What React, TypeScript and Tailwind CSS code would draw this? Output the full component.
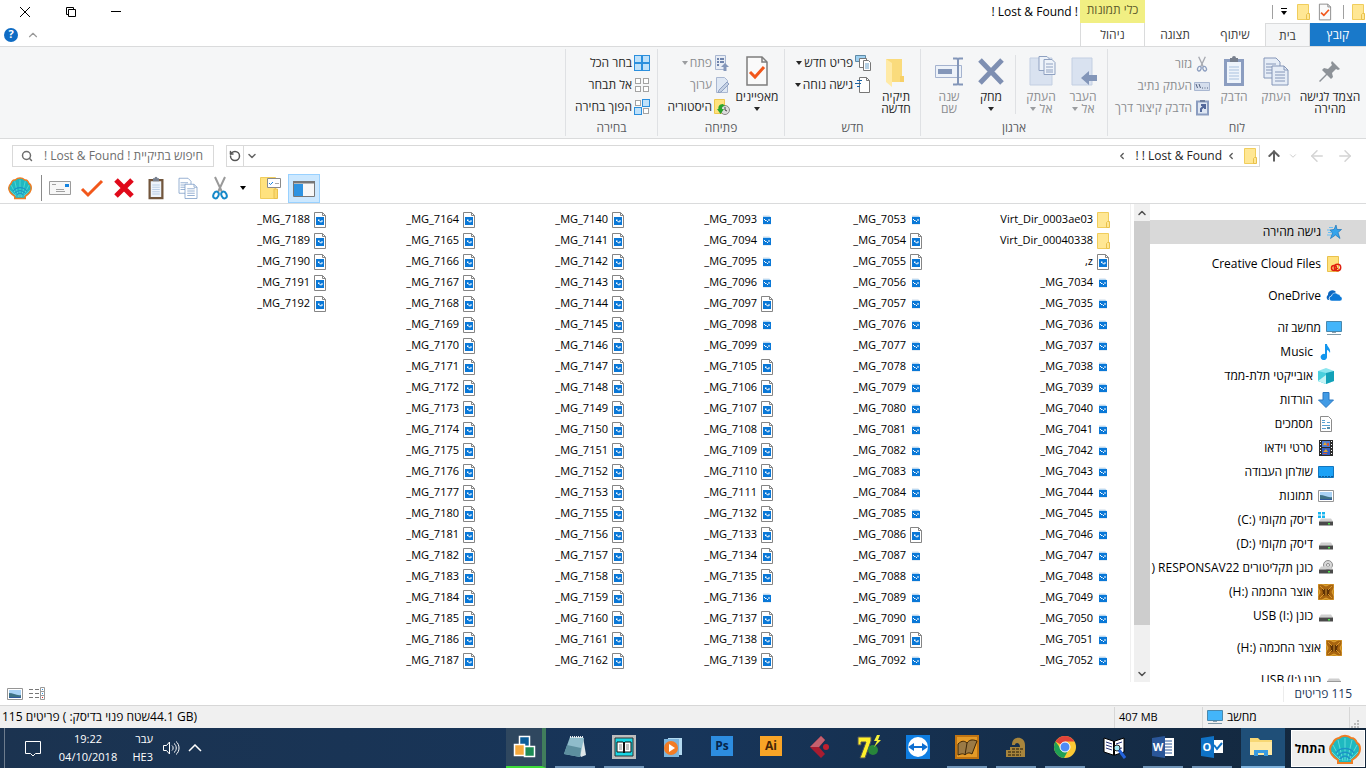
import type { ReactNode } from "react";
import { ArrowLeft, ArrowRight, ArrowUp, ChevronDown, ChevronLeft, ChevronUp, RotateCcw, Search } from "lucide-react";

type IconProps = { className?: string };

/* ---------- icons ---------- */

function Folder({ className = "h-4 w-4" }: IconProps) {
  return (
    <svg viewBox="0 0 16 16" className={className}>
      <path d="M2.5.5h11v15h-11z" fill="#ffe794" stroke="#f0cd5c" />
      <path d="M12.500 9.500h2v6h-3v-5z" fill="#ffe794" stroke="#e9c14c" />
    </svg>
  );
}

function PageImage() {
  return (
    <svg viewBox="0 0 16 16" className="h-4 w-4">
      <path d="M2.5.5h8l3 3v12h-11z" fill="#fff" stroke="#858585" />
      <path d="M10.5.5v3h3" fill="none" stroke="#858585" />
      <path d="M4 5h8v8H4z" fill="#0a78d7" />
      <path d="M6 9V7.500h1.500V9H9v-.500h2v1H9.500v1h-1v-1H7V9z" fill="#fff" />
    </svg>
  );
}

function SmallImage() {
  return (
    <svg viewBox="0 0 16 16" className="h-4 w-4">
      <path d="M4 3h6l2 2v8H4z" fill="#e6edf4" />
      <path d="M4 5h8v7H4z" fill="#0a78d7" />
      <path d="M4 4h7v1H4z" fill="#b9d9f3" />
      <path d="M5 7h1v1H5zM6 8h1.500v1H6zM8 9h1v1H8zM9 7.500h2v1H9z" fill="#fff" />
    </svg>
  );
}

function CheckPage({ className = "h-4 w-4" }: IconProps) {
  return (
    <svg viewBox="0 0 24 32" className={className}>
      <path d="M2 2h15l5 5v23H2z" fill="#fafafa" stroke="#7e7e7e" strokeWidth="1.500" />
      <path d="M17 2v5h5" fill="none" stroke="#7e7e7e" strokeWidth="1.500" />
      <path d="m5 17 5 5 9-10" fill="none" stroke="#f2571b" strokeWidth="3" />
    </svg>
  );
}

function Pin() {
  return (
    <svg viewBox="0 0 32 32" className="h-8 w-8">
      <path d="m18 6 8 8-2 1-2-1-4 4 1 4-2 2-4-4-7 7-1-1 7-7-4-4 2-2 4 1 4-4-1-2z" fill="#8d9298" />
    </svg>
  );
}

function CopyPages({ className = "h-8 w-8", color = "#8496b8", fill = "#e6edf7" }: IconProps & { color?: string; fill?: string }) {
  return (
    <svg viewBox="0 0 32 32" className={className}>
      <path d="M4 3h12l4 4v16H4z" fill={fill} stroke={color} />
      <path d="M6 9h10M6 12h10M6 15h8M6 18h8" stroke={color} />
      <path d="M12 11h12l4 4v15H12z" fill={fill} stroke={color} />
      <path d="M24 11v4h4M15 17h10M15 20h10M15 23h10M15 26h10" fill="none" stroke={color} />
    </svg>
  );
}

function Clipboard({ className = "h-8 w-8", board = "#8b9dc0" }: IconProps & { board?: string }) {
  return (
    <svg viewBox="0 0 32 32" className={className}>
      <path d="M6 4h20v27H6z" fill={board} />
      <path d="M9 7h14v21H9z" fill="#eef4fb" />
      <path d="M12 3h2a2 2 0 0 1 4 0h2v4h-8z" fill="#777f8d" />
      <path d="M11 12h10M11 15h10M11 18h10M11 21h10M11 24h10" stroke="#a9c1de" />
    </svg>
  );
}

function Scissors({ className = "h-4 w-4", handle = "#8d9fc0", blade = "#a6a9b0" }: IconProps & { handle?: string; blade?: string }) {
  return (
    <svg viewBox="0 0 16 24" className={className}>
      <path d="M3 1l7 15M13 1 6 16" stroke={blade} strokeWidth="2" />
      <ellipse cx="4" cy="19" rx="2.500" ry="3.500" fill="none" stroke={handle} strokeWidth="2" transform="rotate(25 4 19)" />
      <ellipse cx="12" cy="19" rx="2.500" ry="3.500" fill="none" stroke={handle} strokeWidth="2" transform="rotate(-25 12 19)" />
    </svg>
  );
}

function PathStrip() {
  return (
    <svg viewBox="0 0 16 16" className="h-4 w-4">
      <path d="M.5 4.500h15v8H.5z" fill="#d5deed" stroke="#a9b7d1" />
      <path d="m2 6 1.500 4M5 6l1.500 4M8 10h1M10.500 10h1M13 10h1" stroke="#53617f" />
    </svg>
  );
}

function PasteShortcut() {
  return (
    <svg viewBox="0 0 16 16" className="h-4 w-4">
      <path d="M3 1.500h11v13H3z" fill="#dfe7f3" stroke="#8b9dc0" strokeWidth="2" />
      <path d="M6 0h5v2H6z" fill="#70809f" />
      <path d="M7 5h4v4M11 5l-4 4v3" fill="none" stroke="#53689a" strokeWidth="2" />
    </svg>
  );
}

function MoveTo() {
  return (
    <svg viewBox="0 0 32 32" className="h-8 w-8">
      <path d="M5 3h20v27H5z" fill="#d9e2f0" stroke="#c3cfe2" />
      <path d="M14 23l8-7v4h8v6h-8v4z" fill="#8396b9" />
    </svg>
  );
}

function CopyTo() {
  return (
    <svg viewBox="0 0 32 32" className="h-8 w-8">
      <path d="M5 3h22v27H5z" fill="#d9e2f0" stroke="#c3cfe2" />
      <path d="M14 1.500h8l3 3v11H14z" fill="#eef3fa" stroke="#8fa1c1" />
      <path d="M19 4.500h8l3 3v12H19z" fill="#eef3fa" stroke="#8fa1c1" />
      <path d="M21 9h7M21 12h7M21 15h7M21 17h7" stroke="#8fa1c1" />
    </svg>
  );
}

function BigCross() {
  return (
    <svg viewBox="0 0 32 32" className="h-8 w-8">
      <path d="m5 5 22 23M27 5 5 28" stroke="#7e8fb2" strokeWidth="5" />
    </svg>
  );
}

function Rename() {
  return (
    <svg viewBox="0 0 32 32" className="h-8 w-8">
      <path d="M2.500 10.500h26v12h-26z" fill="#edf2f9" stroke="#a5b3cf" />
      <path d="M5 14h14v5H5z" fill="#8396b9" />
      <path d="M20 3.500h4l1 1 1-1h4M25 4v25M20 29.500h4l1-1 1 1h4" fill="none" stroke="#8396b9" strokeWidth="2" />
    </svg>
  );
}

function NewFolder() {
  return (
    <svg viewBox="0 0 32 32" className="h-8 w-8">
      <path d="M6 4h16v21l2 2H10z" fill="#fadb7c" />
      <path d="M6 4l6 4v24l-6-5z" fill="#ffeaa6" />
      <path d="M20 21h4v6h-4z" fill="#f7d068" />
    </svg>
  );
}

function NewItem() {
  return (
    <svg viewBox="0 0 16 16" className="h-4 w-4">
      <path d="M.5.5h10v6H.5z" fill="#9fd0f0" stroke="#5e8aa6" />
      <path d="M4.500 3.500h7v9h-7z" fill="#fff" stroke="#777" />
      <path d="M8.500 5.500h5l2 2v8h-7z" fill="#fff" stroke="#777" />
      <path d="M10 9h4M10 11h4M10 13h4" stroke="#6aa0c8" />
    </svg>
  );
}

function EasyAccess() {
  return (
    <svg viewBox="0 0 16 16" className="h-4 w-4">
      <path d="M4.5.5h7l3 3v12h-10z" fill="#fff" stroke="#777" />
      <path d="M11.5.5v3h3" fill="none" stroke="#777" />
      <path d="M2 3.500h5M0 6.500h6M2 9.500h3" stroke="#1763a6" />
    </svg>
  );
}

function OpenIcon() {
  return (
    <svg viewBox="0 0 16 16" className="h-4 w-4">
      <path d="M1.500.500h10v14h-10z" fill="#e8edf5" stroke="#a9b7d1" />
      <path d="M3 4h2M3 7h2M3 10h2M6 4h4M6 7h4" stroke="#7085ad" strokeWidth="2" />
      <path d="M7 12l4-4 4 4h-2.500v4h-3v-4z" fill="#8396b9" />
    </svg>
  );
}

function EditIcon() {
  return (
    <svg viewBox="0 0 16 16" className="h-4 w-4">
      <path d="M2.500.500h8l3 3v12h-11z" fill="#dfe8f4" stroke="#a9b7d1" />
      <path d="m5 13 8-8 2 2-8 8-3 1z" fill="#c3cfe2" stroke="#8ea0c2" />
    </svg>
  );
}

function HistoryIcon() {
  return (
    <svg viewBox="0 0 16 16" className="h-4 w-4">
      <path d="M.5.500h10v14H.5z" fill="#ffe27e" stroke="#efc84f" />
      <circle cx="11" cy="11" r="4.500" fill="#ddd" stroke="#888" />
      <path d="M11 8v3l2 1" fill="none" stroke="#444" />
      <path d="M9 5C5 5 4 8 4.500 10H3l3.500 5L10 10H8c0-2 .5-3 3-3z" fill="#2ca52c" />
    </svg>
  );
}

function SquareGrid({ filled }: { filled: boolean[] }) {
  const spots = [[1, 1], [9, 1], [1, 9], [9, 9]];
  return (
    <svg viewBox="0 0 16 16" className="h-4 w-4">
      {spots.map(([x, y], i) =>
        filled[i] ? (
          <rect key={i} x={x - 0.5} y={y - 0.5} width="7" height="7" fill="#bfe1fa" stroke="#2b8fdd" />
        ) : (
          <rect key={i} x={x + 0.5} y={y + 0.5} width="5" height="5" fill="#fff" stroke="#a3a3a3" />
        ),
      )}
    </svg>
  );
}

function QuickStar() {
  return (
    <svg viewBox="0 0 16 16" className="h-4 w-4">
      <path d="m10 1 1 4.500H15.500l-3.500 3 2 6L9.500 11l-5 3.500 2-5.500L4 6l4-.500z" fill="#35a4ec" stroke="#1a72b8" strokeWidth=".7" />
      <path d="M3 3.500h4M1 6h3M2 8.500h4M1 11h4" stroke="#68bdf2" />
    </svg>
  );
}

function CreativeCloud() {
  return (
    <svg viewBox="0 0 16 16" className="h-4 w-4">
      <path d="M1.5.5h11v15h-11z" fill="#ffe27e" stroke="#e9c14c" />
      <circle cx="8" cy="12" r="2.500" fill="none" stroke="#e0200f" strokeWidth="1.500" />
      <circle cx="11.500" cy="11.500" r="3.200" fill="none" stroke="#e0200f" strokeWidth="1.500" />
      <path d="m8 11 2 1.500h2" fill="none" stroke="#e0200f" />
    </svg>
  );
}

function OneDriveIcon() {
  return (
    <svg viewBox="0 0 16 16" className="h-4 w-4">
      <path d="M2 12a3 3 0 0 1 0-5 4.500 4.500 0 0 1 8-3l-1 1a5 5 0 0 0-4 3 3 3 0 0 0-2 4z" fill="#0a66c0" />
      <path d="M6 13a2.500 2.500 0 0 1-.500-5 3.500 3.500 0 0 1 6-2 3 3 0 0 1 3 2.500A2.300 2.300 0 0 1 14 13z" fill="#0a78d7" stroke="#fff" strokeWidth=".5" />
    </svg>
  );
}

function Monitor() {
  return (
    <svg viewBox="0 0 16 16" className="h-4 w-4">
      <path d="M.5 1.500h15v10H.5z" fill="#43b5fa" stroke="#4a88ad" />
      <path d="M6 12h4v1H6z" fill="#8da2af" />
      <path d="M1 14.500h14" stroke="#7f99a8" />
    </svg>
  );
}

function MusicNote() {
  return (
    <svg viewBox="0 0 16 16" className="h-4 w-4">
      <path d="M7 0h2c0 3 4 4 3 9-1-2-2-3-3-3v6.500A3.200 3.200 0 1 1 7 10z" fill="#1296ee" />
    </svg>
  );
}

function Cube() {
  return (
    <svg viewBox="0 0 16 16" className="h-4 w-4">
      <path d="m0 3 8-3 8 3v10l-8 3-8-3z" fill="#8ce6ef" />
      <path d="m8 5 8-2v10l-8 3z" fill="#12a1b8" />
      <path d="m0 3 8 2v11l-8-3z" fill="#48cfdd" />
      <path d="m0 13 8-6v9z" fill="#c5f4f6" />
    </svg>
  );
}

function DownArrow() {
  return (
    <svg viewBox="0 0 16 16" className="h-4 w-4">
      <path d="M5 .5h6v7.500h4.500L8 15.500.5 8H5z" fill="#429be5" stroke="#2b78c2" />
    </svg>
  );
}

function DocumentIcon() {
  return (
    <svg viewBox="0 0 16 16" className="h-4 w-4">
      <path d="M2.500.500h8l3 3v12h-11z" fill="#fff" stroke="#8c8c8c" />
      <path d="M4 4.500h3M4 6.500h3M9 6.500h3M4 9.500h8M4 12.500h4" stroke="#5aa2d0" />
      <path d="M9 11h3v2H9z" fill="#5a8fa8" />
    </svg>
  );
}

function Film() {
  return (
    <svg viewBox="0 0 16 16" className="h-4 w-4">
      <path d="M1 0h14v16H1z" fill="#2b2b2b" />
      <path d="M4 1h8v6H4z" fill="#4f7dd1" />
      <path d="M4 8h8v7H4z" fill="#345ec1" />
      <path d="m5 5 2-3 2 3zM5 12l3-3 2 3z" fill="#e4a62e" />
      <path d="M9 3h2v3H9zM5 13h4v1H5z" fill="#d4583a" />
      <path d="M2.500 1v15M13.500 1v15" stroke="#fff" strokeDasharray="1 2" />
    </svg>
  );
}

function Desktop() {
  return (
    <svg viewBox="0 0 16 16" className="h-4 w-4">
      <path d="M.5 2.500h15v11H.5z" fill="#1ba1f6" stroke="#1376be" />
      <path d="M1 12.500h14" stroke="#0d5c9c" strokeDasharray="2 1" />
    </svg>
  );
}

function Picture() {
  return (
    <svg viewBox="0 0 16 16" className="h-4 w-4">
      <path d="M.5 2.500h15v11H.5z" fill="#fff" stroke="#959595" />
      <path d="M2 4h12v8H2z" fill="#a9d2f5" />
      <path d="M2 7c4 0 8 3 12 2v3H2z" fill="#3f7285" />
      <path d="M2 11h12v1H2z" fill="#305a9c" />
    </svg>
  );
}

function Drive({ kind }: { kind?: "windows" | "disc" }) {
  return (
    <svg viewBox="0 0 16 16" className="h-4 w-4">
      {kind === "windows" && <path d="M0 0h3v2.500H0zM4 0h3v2.500H4zM0 3.500h3V6H0zM4 3.500h3V6H4z" fill="#18b4ee" />}
      {kind === "disc" && <circle cx="10" cy="5" r="4.500" fill="#d8d8d8" stroke="#8c8c8c" />}
      {kind === "disc" && <circle cx="10" cy="5" r="1.500" fill="#fff" stroke="#888" />}
      <path d="M3 6.500h10l2 3H1z" fill="#cfcfcf" />
      <path d="M1 9.500h14v4H1z" fill="#4a4a4a" />
      <path d="M10 11h2v1.500h-2z" fill="#4be04b" />
    </svg>
  );
}

function Treasure() {
  return (
    <svg viewBox="0 0 16 16" className="h-4 w-4">
      <path d="M0 0h16v16H0z" fill="#c98a1b" />
      <path d="M0 0h4l4 2 4-2h4v4l-2 4 2 4v4h-4l-4-2-4 2H0v-4l2-4-2-4z" fill="#a86510" stroke="#e3a93a" />
      <path d="M4 5h8l-1 4 1 3-4-1-4 1 1-3z" fill="#5f3206" />
      <path d="m2 2 4 4M14 2l-4 4M2 14l4-4M14 14l-4-4M8 5v6" stroke="#d9972b" />
    </svg>
  );
}

function Shell({ className = "h-6 w-6" }: IconProps) {
  return (
    <svg viewBox="0 0 32 32" className={className}>
      <path d="M9 30v-3C4 24 1 21 1 16c0-3 2-5 3-6 1-3 4-5 6-5 3-3 9-3 12 0 3 0 5 2 6 5 2 1 3 3 3 6 0 5-3 8-8 11v3z" fill="#1fb9c0" stroke="#ee7d24" strokeWidth="2" />
      <path d="M16 28V5M14 28 9 7M18 28l5-21M12 27 4 12M20 27l8-15M11 27l-8-8M21 27l8-8" stroke="#62dcdc" />
      <path d="M7 20c4-6 14-6 18 0M9 23c4-5 10-5 14 0M11 26c3-4 7-4 10 0" fill="none" stroke="#1c93c6" strokeWidth="1.500" />
    </svg>
  );
}

function Caret({ className = "text-black" }: IconProps) {
  return (
    <svg viewBox="0 0 6 4" className={`h-1 w-1.5 ${className}`}>
      <path d="M0 0h6L3 4z" fill="currentColor" />
    </svg>
  );
}

/* ---------- ribbon ---------- */

function BigButton({ icon, lines, width = "w-[42px]", caret, muted }: {
  icon: ReactNode; lines: string[]; width?: string; caret?: boolean; muted?: boolean;
}) {
  const tone = muted ? "text-[#8b8d90]" : "text-[#262626]";
  const last = lines.length - 1;
  return (
    <button className={`flex shrink-0 flex-col items-center whitespace-nowrap pt-1.5 ${width} ${tone}`}>
      {icon}
      {lines.map((line, i) => (
        <span key={line} className={`flex items-center gap-1 leading-3 ${i === 0 ? "mt-1" : ""}`}>
          {line}
          {caret && last > 0 && i === last && <Caret className="text-[#9b9da0]" />}
        </span>
      ))}
      {caret && last === 0 && <Caret className="mt-1 text-[#262626]" />}
    </button>
  );
}

function SmallButton({ icon, label, caret, muted }: { icon: ReactNode; label: string; caret?: boolean; muted?: boolean }) {
  return (
    <button className={`flex h-[22px] items-center gap-0.5 whitespace-nowrap ${muted ? "text-[#8b8d90]" : "text-[#262626]"}`}>
      {icon}
      {label}
      {caret && <Caret className={muted ? "text-[#9b9da0]" : "text-[#262626]"} />}
    </button>
  );
}

function Group({ title, width, inset = "pr-[3px]", children }: { title: string; width: string; inset?: string; children: ReactNode }) {
  return (
    <section aria-label={title} className={`my-0.5 flex shrink-0 flex-col border-l border-[#dfe1e4] ${width}`}>
      <div className={`flex h-[73px] ${inset}`}>{children}</div>
      <div className="text-center leading-4 text-[#5a5c60]">{title}</div>
    </section>
  );
}

function Ribbon() {
  return (
    <div className="flex h-[93px] shrink-0 border-y border-[#dadbdc] bg-[#f5f6f7]">
      <Group title="לוח" width="w-[259px]">
        <BigButton icon={<Pin />} lines={["הצמד לגישה", "מהירה"]} width="w-[66px]" />
        <BigButton icon={<CopyPages />} lines={["העתק"]} muted />
        <BigButton icon={<Clipboard />} lines={["הדבק"]} muted />
        <div className="flex flex-col pr-[3px] pt-1">
          <SmallButton icon={<Scissors />} label="גזור" muted />
          <SmallButton icon={<PathStrip />} label="העתק נתיב" muted />
          <SmallButton icon={<PasteShortcut />} label="הדבק קיצור דרך" muted />
        </div>
      </Group>
      <Group title="ארגון" width="w-[187px]">
        <BigButton icon={<MoveTo />} lines={["העבר", "אל"]} caret muted />
        <BigButton icon={<CopyTo />} lines={["העתק", "אל"]} caret muted />
        <div className="ml-[3px] mr-1 my-1.5 w-px shrink-0 bg-[#dfe1e4]" />
        <BigButton icon={<BigCross />} lines={["מחק"]} caret />
        <BigButton icon={<Rename />} lines={["שנה", "שם"]} muted />
      </Group>
      <Group title="חדש" width="w-[136px]">
        <BigButton icon={<NewFolder />} lines={["תיקיה", "חדשה"]} />
        <div className="flex flex-col pr-1 pt-[3px]">
          <SmallButton icon={<NewItem />} label="פריט חדש" caret />
          <SmallButton icon={<EasyAccess />} label="גישה נוחה" caret />
        </div>
      </Group>
      <Group title="פתיחה" width="w-[127px]">
        <BigButton icon={<CheckPage className="h-8 w-7" />} lines={["מאפיינים"]} width="w-12" caret />
        <div className="flex flex-col pr-[3px] pt-[3px]">
          <SmallButton icon={<OpenIcon />} label="פתח" caret muted />
          <SmallButton icon={<EditIcon />} label="ערוך" muted />
          <SmallButton icon={<HistoryIcon />} label="היסטוריה" />
        </div>
      </Group>
      <Group title="בחירה" width="w-[92px]" inset="pr-[7px]">
        <div className="flex flex-col pt-[3px]">
          <SmallButton icon={<SquareGrid filled={[true, true, true, true]} />} label="בחר הכל" />
          <SmallButton icon={<SquareGrid filled={[false, false, false, false]} />} label="אל תבחר" />
          <SmallButton icon={<SquareGrid filled={[false, true, true, false]} />} label="הפוך בחירה" />
        </div>
      </Group>
    </div>
  );
}

/* ---------- window chrome ---------- */

function TitleBar() {
  return (
    <header className="shrink-0">
      <div className="flex h-[23px]">
        <div className="flex w-[221px] shrink-0 items-center">
          <Folder />
          <span className="ml-1 mr-1.5 h-3.5 w-px bg-[#a0a0a0]" />
          <span className="w-1" />
          <CheckPage className="h-[18px] w-5" />
          <span className="w-1" />
          <Folder />
          <button aria-label="התאם אישית" className="mx-2 flex flex-col items-center gap-0.5">
            <span className="h-px w-1.5 bg-black" />
            <Caret />
          </button>
          <span className="h-3.5 w-px bg-[#a0a0a0]" />
        </div>
        <div className="w-[65px] shrink-0 bg-[#f1ef83] pt-0.5 text-center leading-4 text-[#5d5b2c]">כלי תמונות</div>
        <h1 dir="ltr" className="px-0.5 pt-1 leading-4">! Lost &amp; Found !</h1>
        <div dir="ltr" className="mr-auto flex">
          <button aria-label="סגור" className="flex w-[50px] items-center justify-center">
            <svg viewBox="0 0 10 10" className="h-2.5 w-2.5"><path d="m0 0 10 10M10 0 0 10" stroke="#000" /></svg>
          </button>
          <button aria-label="שחזר" className="flex w-[42px] items-center justify-center">
            <svg viewBox="0 0 10 10" className="h-2.5 w-2.5"><path d="M2.500 2.500h7v7h-7zM2.500 7.500h-2v-7h7v2" fill="none" stroke="#000" /></svg>
          </button>
          <button aria-label="מזער" className="flex w-12 items-center justify-center">
            <span className="h-px w-2.5 bg-black" />
          </button>
          <span className="w-10" />
        </div>
      </div>
      <nav className="flex h-[23px] text-[#3a3a3a]">
        <button className="w-14 bg-[#1979ca] text-white">קובץ</button>
        <button className="-mb-px w-[45px] border-x border-t border-[#dadbdc] bg-[#f5f6f7]">בית</button>
        <button className="w-[60px]">שיתוף</button>
        <button className="w-[60px]">תצוגה</button>
        <button className="w-[65px] border-x border-[#dadbdc]">ניהול</button>
        <div dir="ltr" className="mr-auto flex items-center gap-2 pl-1">
          <button aria-label="עזרה" className="flex h-3.5 w-3.5 items-center justify-center rounded-full bg-[#0f6cc4] text-[11px] font-bold text-white">?</button>
          <button aria-label="מזער רצועת כלים"><ChevronUp className="h-3.5 w-3.5 text-[#9a9a9a]" /></button>
        </div>
      </nav>
    </header>
  );
}

function AddressBar() {
  return (
    <div className="flex h-[34px] shrink-0 items-center px-3 text-[#222]">
      <button aria-label="קדימה"><ArrowRight className="h-[18px] w-[18px] text-[#d4d4d4]" /></button>
      <button aria-label="אחורה" className="mr-2.5"><ArrowLeft className="h-[18px] w-[18px] text-[#d4d4d4]" /></button>
      <button aria-label="מיקומים אחרונים" className="mr-2.5"><ChevronDown className="h-2.5 w-2.5 text-[#c4c4c4]" /></button>
      <button aria-label="למעלה" className="ml-1.5 mr-1.5"><ArrowUp className="h-4 w-4 text-[#5f5f5f]" strokeWidth={3} /></button>
      <div className="flex h-[22px] grow items-center border border-[#d9d9d9] pr-px">
        <Folder />
        <ChevronLeft className="mr-1.5 h-2.5 w-2.5 text-[#555]" strokeWidth={3} />
        <span dir="ltr" className="mx-1">! ! Lost &amp; Found</span>
        <ChevronLeft className="mr-1 h-2.5 w-2.5 text-[#555]" strokeWidth={3} />
        <div className="mr-auto flex h-full items-center">
          <button aria-label="מיקומים קודמים" className="flex w-4 justify-center"><ChevronDown className="h-3 w-3 text-[#666]" strokeWidth={3} /></button>
          <button aria-label="רענן" className="flex h-full w-[17px] items-center justify-center border-r border-[#d9d9d9]"><RotateCcw className="h-3 w-3 text-[#555]" strokeWidth={3} /></button>
        </div>
      </div>
      <label className="mr-3 flex h-[22px] w-[202px] shrink-0 items-center border border-[#d9d9d9] px-2">
        <input aria-label="חיפוש" placeholder="חיפוש בתיקיית ! Lost & Found !" className="min-w-0 grow pr-0.5 placeholder:text-[#6d6d6d] outline-none" />
        <Search className="h-3 w-3 shrink-0 text-[#6d6d6d]" strokeWidth={3} />
      </label>
    </div>
  );
}

function Toolbar() {
  return (
    <div dir="ltr" className="flex h-[31px] shrink-0 items-center border-b border-[#dadbdc] pl-2">
      <button aria-label="Classic Shell" className="w-6"><Shell /></button>
      <span className="ml-[9px] mr-1.5 h-[26px] w-px bg-[#8a8a8a]" />
      <button aria-label="מאפיינים" className="w-6">
        <svg viewBox="0 0 24 24" className="h-6 w-6">
          <path d="M1.500 5.500h21v13h-21z" fill="#f7f7f7" stroke="#9b9b9b" />
          <path d="M17 8h4v3h-4z" fill="#1684e0" />
          <path d="M4 8.500h4M8 13.500h8M8 15.500h9" stroke="#a0a0a0" />
        </svg>
      </button>
      <button aria-label="אישור" className="ml-2 w-6">
        <svg viewBox="0 0 24 24" className="h-6 w-6"><path d="m2 13 6 6L22 5" fill="none" stroke="#f2571b" strokeWidth="3" /></svg>
      </button>
      <button aria-label="מחק" className="ml-2 w-6">
        <svg viewBox="0 0 24 24" className="h-6 w-6"><path d="m4 4 16 16M20 4 4 20" stroke="#e0091a" strokeWidth="5" /></svg>
      </button>
      <button aria-label="הדבק" className="ml-2 w-6"><Clipboard className="h-6 w-6" board="#72563c" /></button>
      <button aria-label="העתק" className="ml-2 w-6"><CopyPages className="h-6 w-6" color="#7798c4" fill="#fff" /></button>
      <button aria-label="גזור" className="ml-2 w-6"><Scissors className="h-6 w-6" handle="#1689c9" blade="#9a9a9a" /></button>
      <button aria-label="עוד" className="mx-2"><Caret /></button>
      <button aria-label="אפשרויות תיקיה" className="ml-1 w-6">
        <svg viewBox="0 0 24 24" className="h-6 w-6">
          <path d="M2.500 1.500h15v21h-15z" fill="#ffe27e" stroke="#f0cd5c" />
          <path d="M16 13h3.500v9.500H16z" fill="#fbd970" stroke="#e9c14c" />
          <path d="M9.500 2.500h13v9h-13z" fill="#fff" stroke="#8a8a8a" />
          <path d="M11 7l1.500 1.500L15 6" fill="none" stroke="#1684e0" />
          <path d="M17 7.500h4" stroke="#aaa" />
        </svg>
      </button>
      <button aria-label="חלונית ניווט" className="ml-1.5 flex h-[29px] w-8 items-center justify-center border border-[#99d1ff] bg-[#cce8ff]">
        <svg viewBox="0 0 24 20" className="h-5 w-6">
          <path d="M1.500 3.500h21v15h-21z" fill="#f7f7f7" stroke="#777" />
          <path d="M1 3h22v2.500H1z" fill="#777" />
          <path d="M2 6h9v12H2z" fill="#2d93e2" />
        </svg>
      </button>
    </div>
  );
}

/* ---------- files ---------- */

// A trailing * marks a file that has the full page icon.
const columns = [
  "Virt_Dir_0003ae03 Virt_Dir_00040338 ,z* 7034 7035 7036 7037 7038 7039 7040 7041 7042 7043 7044 7045 7046 7047 7048 7049 7050 7051 7052",
  "7053 7054* 7055* 7056 7057 7076 7077 7078 7079 7080 7081 7082 7083 7084 7085 7086* 7087 7088 7089 7090 7091* 7092",
  "7093 7094 7095 7096 7097* 7098 7099 7105* 7106* 7107* 7108* 7109* 7110* 7111* 7132* 7133* 7134* 7135* 7136 7137* 7138* 7139*",
  "7140* 7141* 7142* 7143* 7144* 7145* 7146* 7147* 7148* 7149* 7150* 7151* 7152* 7153* 7155* 7156* 7157* 7158* 7159* 7160* 7161* 7162*",
  "7164* 7165* 7166* 7167* 7168* 7169* 7170* 7171* 7172* 7173* 7174* 7175* 7176* 7177* 7180* 7181* 7182* 7183* 7184* 7185* 7186* 7187*",
  "7188* 7189* 7190* 7191* 7192*",
].map((column) => column.split(" "));

function FileEntry({ entry }: { entry: string }) {
  const name = entry.replace("*", "");
  const icon = name.startsWith("Virt") ? <Folder /> : entry.endsWith("*") ? <PageImage /> : <SmallImage />;
  return (
    <li className="flex h-[21px] items-center gap-0.5">
      {icon}
      <span dir="ltr">{/^\d/.test(name) ? `_MG_${name}` : name}</span>
    </li>
  );
}

function FileList() {
  return (
    <main className="flex min-w-0 grow overflow-hidden border-r border-[#f0f0f0] pr-[19px] pt-[5px] text-[11px]">
      {columns.map((column, i) => (
        <ul key={column[0]} className={`shrink-0 ${i === 0 ? "w-[187px]" : "w-[149px]"}`}>
          {column.map((entry) => <FileEntry key={entry} entry={entry} />)}
        </ul>
      ))}
    </main>
  );
}

function ScrollBar() {
  return (
    <div className="ml-[3px] flex w-4 shrink-0 flex-col bg-[#f0f0f0]">
      <button aria-label="גלול למעלה" className="flex h-[17px] items-center justify-center"><ChevronUp className="h-3 w-3 text-[#505050]" strokeWidth={3} /></button>
      <div className="grow"><div className="h-[91%] bg-[#cdcdcd]" /></div>
      <button aria-label="גלול למטה" className="flex h-[17px] items-center justify-center"><ChevronDown className="h-3 w-3 text-[#505050]" strokeWidth={3} /></button>
    </div>
  );
}

const places: { label: string; icon: ReactNode; nested?: boolean; gap?: boolean; active?: boolean }[] = [
  { label: "גישה מהירה", icon: <QuickStar />, active: true },
  { label: "Creative Cloud Files", icon: <CreativeCloud />, gap: true },
  { label: "OneDrive", icon: <OneDriveIcon />, gap: true },
  { label: "מחשב זה", icon: <Monitor />, gap: true },
  { label: "Music", icon: <MusicNote />, nested: true },
  { label: "אובייקטי תלת-ממד", icon: <Cube />, nested: true },
  { label: "הורדות", icon: <DownArrow />, nested: true },
  { label: "מסמכים", icon: <DocumentIcon />, nested: true },
  { label: "סרטי וידאו", icon: <Film />, nested: true },
  { label: "שולחן העבודה", icon: <Desktop />, nested: true },
  { label: "תמונות", icon: <Picture />, nested: true },
  { label: "דיסק מקומי \u2066(C:)\u2069", icon: <Drive kind="windows" />, nested: true },
  { label: "דיסק מקומי \u2066(D:)\u2069", icon: <Drive />, nested: true },
  { label: "כונן תקליטורים \u2066) RESPONSAV22\u2069", icon: <Drive kind="disc" />, nested: true },
  { label: "אוצר החכמה \u2066(H:)\u2069", icon: <Treasure />, nested: true },
  { label: "כונן \u2066USB (I:)\u2069", icon: <Drive />, nested: true },
  { label: "אוצר החכמה \u2066(H:)\u2069", icon: <Treasure />, gap: true },
  { label: "כונן \u2066USB (I:)\u2069", icon: <Drive />, gap: true },
];

function Sidebar() {
  return (
    <nav className="w-[216px] shrink-0 overflow-hidden pt-4">
      {places.map((place, i) => (
        <a
          key={i}
          href="#"
          className={`flex h-6 items-center gap-[5px] whitespace-nowrap ${place.nested ? "pr-8" : "pr-6"} ${place.gap ? "mt-2" : ""} ${place.active ? "bg-[#d9d9d9]" : ""}`}
        >
          <span className="shrink-0">{place.icon}</span>
          {place.label}
        </a>
      ))}
    </nav>
  );
}

function StatusBars() {
  return (
    <footer className="shrink-0">
      <div className="flex h-[23px] items-center pl-[7px] pr-3.5 text-[#1e395b]">
        <span className="border-l border-[#ececec] pl-2.5">115 פריטים</span>
        <div dir="ltr" className="mr-auto flex items-center gap-1.5">
          <button aria-label="סמלים גדולים" className="h-4 w-4"><Picture /></button>
          <button aria-label="רשימה" className="h-4">
            <svg viewBox="0 0 16 16" className="h-4 w-4">
              <path d="M0 3.500h10M0 7.500h10M0 11.500h10" stroke="#777" strokeDasharray="4 2" />
              <path d="M11.500 1.500h4v4h-4zM11.500 5.500h4v4h-4zM11.500 9.500h4v4h-4z" fill="#fff" stroke="#999" />
              <path d="M13 3h1v1h-1zM13 7h1v1h-1z" fill="#2b8fdd" />
              <path d="M13 11h1v1h-1z" fill="#d22" />
            </svg>
          </button>
        </div>
      </div>
      <div className="flex h-[23px] items-center border-t border-[#d7d7d7] bg-[#f0f0f0]">
        <span className="flex h-[21px] w-[17px] items-end justify-end border-l border-[#d7d7d7]">
          <svg viewBox="0 0 10 10" className="h-2.5 w-2.5"><path d="M1 8h2v2H1zM4 8h2v2H4zM7 8h2v2H7zM4 5h2v2H4zM7 5h2v2H7zM7 2h2v2H7z" fill="#bbb" /></svg>
        </span>
        <span dir="ltr" className="flex h-[21px] w-[147px] items-center gap-1 border-l border-[#d7d7d7] pl-1"><Monitor />מחשב</span>
        <span dir="ltr" className="flex h-[21px] w-[88px] items-center border-l border-[#d7d7d7] pl-1 text-[11px]">407 MB</span>
        <span dir="ltr" className="mr-auto whitespace-pre pl-0.5">
          115 <bdi>פריטים</bdi>{" ( "}<bdi dir="rtl">שטח פנוי בדיסק:</bdi>{"\u200e44.1 GB)"}
        </span>
      </div>
    </footer>
  );
}

/* ---------- taskbar ---------- */

const apps: { name: string; open?: boolean; icon: ReactNode }[] = [
  { name: "Notepad", open: true, icon: <><path d="M7 2h13l3 18-5 2z" fill="#dfe7ea" /><path d="m7 2 14 1-4 19L1 19z" fill="#8fbccb" /><path d="m4 10 14 3-1 9L1 19z" fill="#5d8f9f" /><path d="M7 2h14" stroke="#e8edf0" strokeWidth="2" strokeDasharray="1 1" /></> },
  { name: "Library", open: true, icon: <><path d="M0 0h24v24H0z" fill="#bdbdbd" /><path d="M3 3h18v18H3z" fill="#18d6e4" stroke="#333" /><path d="M5 7h6l1 1 1-1h6v10h-6l-1 1-1-1H5z" fill="#fff" stroke="#111" /><path d="M12 8v9" stroke="#111" strokeWidth="2" /><path d="M7 10h3M7 12h3M7 14h3M14 10h3M14 12h3M14 14h3" stroke="#888" /></> },
  { name: "Media Player", icon: <><path d="M7 3h14v17H7z" fill="#b3d9f0" /><path d="M3 4h15v18H3z" fill="#7db5dd" /><circle cx="10" cy="13" r="7" fill="#f37c24" /><path d="m8 9 6 4-6 4z" fill="#fff" /></> },
  { name: "Photoshop", icon: <><path d="M1 1h22v20H1z" fill="#2d8de0" /><text x="12" y="15" textAnchor="middle" fontSize="12" fontWeight="700" fill="#06264c">Ps</text></> },
  { name: "Illustrator", icon: <><path d="M1 1h22v20H1z" fill="#f8a427" /><text x="12" y="15" textAnchor="middle" fontSize="12" fontWeight="700" fill="#452407">Ai</text></> },
  { name: "Cubase", icon: <><path d="m13 1 4 4-6 7 6 7-4 4L2 12z" fill="#a81c30" /><path d="m13 1 4 4-6 7H2z" fill="#c4616f" /><circle cx="18" cy="12" r="3" fill="#c0202f" /></> },
  { name: "7z", icon: <><path d="M1 2h13v4L8 23H3l6-16H4v3H1z" fill="#fff02a" stroke="#555" /><circle cx="16" cy="15" r="5" fill="#28863a" /><path d="m20 0-3 6h3l-3 6 7-7h-3l2-5z" fill="#f4f03a" /></> },
  { name: "TeamViewer", icon: <><path d="M0 0h24v24H0z" fill="#0e7de1" /><circle cx="12" cy="12" r="10" fill="#fff" /><path d="m2 12 6-4v3h8V8l6 4-6 4v-3H8v3z" fill="#0e6fd1" /></> },
  { name: "Otzar", open: true, icon: <><path d="M0 0h24v24H0z" fill="#c07412" /><path d="M2 2h20v20H2z" fill="#e59b28" /><path d="M3 9c4-4 7-3 9-1 2-3 5-4 10-2l-5 13c-3-2-5-1-7 1-2-2-4-1-7 0z" fill="#9b7a45" stroke="#3c2608" /><path d="M12 8l-2 12" stroke="#3c2608" /></> },
  { name: "Bar Ilan", open: true, icon: <><path d="M8 10c0-10 13-9 13 0v12H2v-7h4v-3h10c0-5-5-5-5-2z" fill="#a8853c" /><path d="M4 17h13M4 20h13M8 14h11" stroke="#4e3c18" strokeWidth="1.500" strokeDasharray="3 1" /></> },
  { name: "Chrome", open: true, icon: <><circle cx="12" cy="12" r="11" fill="#fcc934" /><path d="M12 12 2.500 6.500A11 11 0 0 1 21.500 6.500H12z" fill="#e1433a" /><path d="M2.500 6.500A11 11 0 0 0 11 23l5-9-4-2-4 2z" fill="#1fa055" /><circle cx="12" cy="12" r="5" fill="#4c8bf5" stroke="#fff" /></> },
  { name: "Book Search", icon: <><path d="m2 3 9 3 1 1 1-1 9-3v14l-9 3h-2l-9-3z" fill="#fff" stroke="#000" /><path d="M12 7v13" stroke="#000" strokeWidth="2" /><path d="m4 7 6 2M4 10l6 2M4 13l6 2M14 9l6-2M15 14l5-1" stroke="#29357c" /><circle cx="15" cy="13" r="3" fill="#a2e9f4" stroke="#222" /><path d="m17 15 6 8" stroke="#2564dc" strokeWidth="3" /></> },
  { name: "Word", open: true, icon: <><path d="M13 3h10v18H13z" fill="#fff" /><path d="M14 6h7M14 9h7M14 12h7M14 15h7M14 18h7" stroke="#2a5699" /><path d="m1 3 13-2v22L1 21z" fill="#2a5699" /><text x="7" y="16" textAnchor="middle" fontSize="11" fontWeight="700" fill="#fff">W</text></> },
  { name: "Outlook", open: true, icon: <><path d="M13 5h10v13H13z" fill="#fff" /><path d="m14 10 3 4 5-6" fill="none" stroke="#0f72c6" strokeWidth="2" /><path d="m1 3 13-2v22L1 21z" fill="#0f72c6" /><text x="7" y="16" textAnchor="middle" fontSize="11" fontWeight="700" fill="#fff">O</text></> },
];

function AppIcon({ children }: { children: ReactNode }) {
  return <svg viewBox="0 0 24 24" className="h-6 w-6">{children}</svg>;
}

function Taskbar() {
  return (
    <div dir="ltr" className="flex h-10 shrink-0 bg-gradient-to-r from-[#1b3350] via-[#17355a] to-[#13273c] text-white">
      <span className="ml-1 w-px bg-[#6d7c8d]" />
      <button aria-label="הודעות" className="ml-4 flex w-6 items-center justify-center">
        <svg viewBox="0 0 18 18" className="h-[18px] w-[18px]"><path d="M1.500 2.500h15v12h-5L9 17l-2.500-2.500h-5z" fill="none" stroke="#fff" /></svg>
      </button>
      <div className="ml-3 flex w-[62px] flex-col justify-center text-center text-[11px] leading-[18px]"><span>19:22</span><span>04/10/2018</span></div>
      <div className="ml-2.5 flex w-6 flex-col justify-center text-right text-[11px] leading-[18px]"><span>עבר</span><span>HE3</span></div>
      <button aria-label="עוצמת קול" className="ml-2 flex w-5 items-center justify-center">
        <svg viewBox="0 0 18 16" className="h-4 w-[18px]"><path d="M1.500 5.500h3l3-3.500v12l-3-3.500h-3zM10 5.500c1.500 1 1.500 4 0 5M12 3.500c3 2 3 7 0 9M14 1.500c4 3 4 10 0 13" fill="none" stroke="#fff" /></svg>
      </button>
      <button aria-label="סמלים מוסתרים" className="ml-1.5 flex w-4 items-center justify-center">
        <svg viewBox="0 0 14 8" className="h-2 w-3.5"><path d="m1 7 6-6 6 6" fill="none" stroke="#fff" strokeWidth="1.500" /></svg>
      </button>
      <div className="ml-auto flex gap-[9px]">
        <button aria-label="Classic Start" className="flex w-10 items-center justify-center border-b-2 border-r-4 border-b-[#3ddc3a] border-r-[#417d5c] bg-[#2f475f]">
          <AppIcon>
            <path d="M7.500 1.500h10v10h-10z" fill="#0b5d99" stroke="#fff" strokeWidth="1.500" />
            <path d="M12.500 11.500h10v10h-10z" fill="#1c8a55" stroke="#fff" strokeWidth="1.500" />
            <path d="M2.500 9.500h10v11h-10z" fill="#f4a83d" stroke="#fff" strokeWidth="1.500" />
          </AppIcon>
        </button>
        {apps.map((app) => (
          <button key={app.name} aria-label={app.name} className={`flex w-10 items-center justify-center border-b-2 ${app.open ? "border-[#7195b8]" : "border-transparent"}`}>
            <AppIcon>{app.icon}</AppIcon>
          </button>
        ))}
        <button aria-label="סייר הקבצים" className="flex w-11 items-center justify-center border-b-2 border-[#7fb2dc] bg-[#1f4f78] pr-1">
          <AppIcon>
            <path d="M1 3h8l2 2h12v15H1z" fill="#f7d774" />
            <path d="M1 7h22v13H1z" fill="#ffe9a3" />
            <path d="M5 21v-6h14v6h-4v-3H9v3z" fill="#3a9be0" />
          </AppIcon>
        </button>
      </div>
      <button className="ml-1.5 mr-px mt-0.5 flex h-[37px] w-[74px] items-center justify-center gap-1 border border-white bg-[#efefef] font-bold text-black">
        התחל
        <Shell className="h-8 w-8" />
      </button>
    </div>
  );
}

export default function App() {
  return (
    <div dir="rtl" className="flex h-screen flex-col overflow-hidden bg-white font-['Open_Sans','Noto_Sans','DejaVu_Sans',sans-serif] text-xs text-black">
      <TitleBar />
      <Ribbon />
      <AddressBar />
      <Toolbar />
      <div className="flex min-h-0 grow basis-0">
        <Sidebar />
        <ScrollBar />
        <FileList />
      </div>
      <StatusBars />
      <Taskbar />
    </div>
  );
}
